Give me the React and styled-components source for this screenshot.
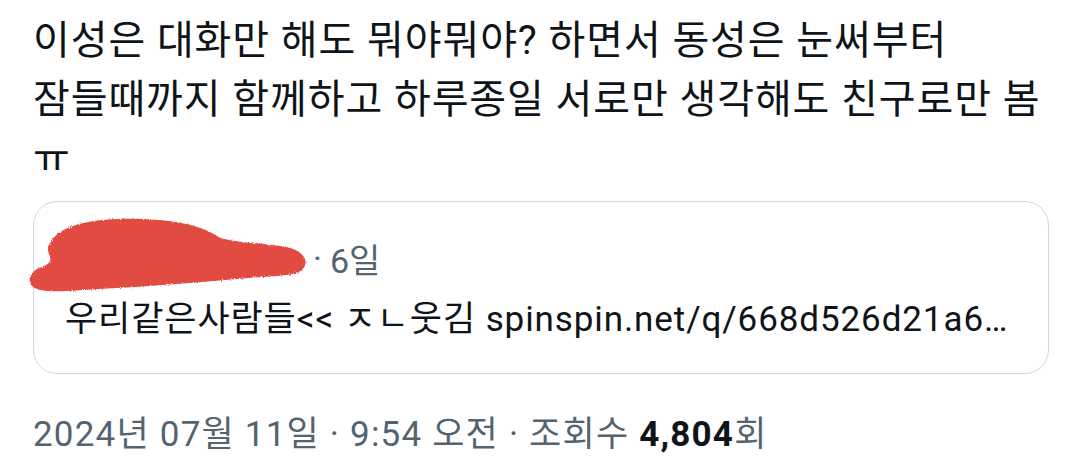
import React from 'react';
import styled, { createGlobalStyle } from 'styled-components';

const GlobalStyle = createGlobalStyle`
  html, body {
    margin: 0;
    padding: 0;
    background: #ffffff;
  }
  body {
    font-family: Roboto, "Noto Sans CJK KR", "Noto Sans", sans-serif;
    -webkit-font-smoothing: antialiased;
  }
`;

const Page = styled.div`
  width: 1080px;
  height: 472px;
  box-sizing: border-box;
  padding: 11px 30px 0 33px;
  overflow: hidden;
`;

const TweetText = styled.div`
  font-size: 40px;
  letter-spacing: 0.9px;
  line-height: 59px;
  color: #0f1419;
  white-space: pre-line;
  word-break: keep-all;
`;

const QuoteCard = styled.div`
  position: relative;
  margin-top: 13px;
  width: 1016px;
  height: 173px;
  box-sizing: border-box;
  border: 1px solid #cfd9de;
  border-radius: 24px;
  padding: 34px 20px 0 31px;
`;

const QuoteHeader = styled.div`
  display: flex;
  align-items: center;
  height: 44px;
  font-size: 34px;
  color: #536471;
  white-space: nowrap;
`;

const HiddenName = styled.span`
  display: inline-block;
  width: 248px;
  color: #0f1419;
`;

const Dot = styled.span`
  margin: 0 8px 0 0;
`;

const QuoteBody = styled.div`
  margin-top: 18px;
  font-size: 35px;
  letter-spacing: 0.9px;
  line-height: 44px;
  color: #0f1419;
  white-space: nowrap;
  overflow: hidden;
`;

const Scribble = styled.svg`
  position: absolute;
  left: -6px;
  top: 18px;
  width: 282px;
  height: 76px;
  overflow: visible;
`;

const Meta = styled.div`
  margin-top: 39px;
  font-size: 35px;
  letter-spacing: 1.2px;
  line-height: 44px;
  color: #536471;
  white-space: nowrap;
`;

const Count = styled.span`
  font-weight: 700;
  color: #0f1419;
`;

// red marker scribble hiding the quoted account
const RedScribble = () => (
  <Scribble viewBox="0 0 282 76">
    <defs>
      <filter id="rough" x="-5%" y="-10%" width="110%" height="120%">
        <feTurbulence type="fractalNoise" baseFrequency="0.9" numOctaves="2" result="n" />
        <feDisplacementMap in="SourceGraphic" in2="n" scale="3" />
      </filter>
    </defs>
    <path
      filter="url(#rough)"
      fill="#e24b43"
      d="M23 22 C 30 8, 55 0, 90 -1 C 130 -2, 170 2, 192 18 C 215 24, 248 24, 262 28
         C 276 32, 282 42, 274 50 C 266 56, 248 56, 220 58 C 170 62, 120 67, 70 69
         C 40 71, 12 74, 4 66 C -2 58, 4 50, 14 47 C 22 44, 24 40, 21 34 C 19 29, 20 25, 23 22 Z"
    />
  </Scribble>
);

export default function App() {
  return (
    <>
      <GlobalStyle />
      <Page>
        <TweetText>
          {'이성은 대화만 해도 뭐야뭐야? 하면서 동성은 눈써부터\n잠들때까지 함께하고 하루종일 서로만 생각해도 친구로만 봄\nㅠ'}
        </TweetText>
        <QuoteCard>
          <QuoteHeader>
            <HiddenName>익명의 계정</HiddenName>
            <Dot>·</Dot>
            <span>6일</span>
          </QuoteHeader>
          <QuoteBody>우리같은사람들&lt;&lt; ㅈㄴ웃김 spinspin.net/q/668d526d21a6…</QuoteBody>
          <RedScribble />
        </QuoteCard>
        <Meta>
          2024년 07월 11일 · 9:54 오전 · 조회수 <Count>4,804</Count>회
        </Meta>
      </Page>
    </>
  );
}
